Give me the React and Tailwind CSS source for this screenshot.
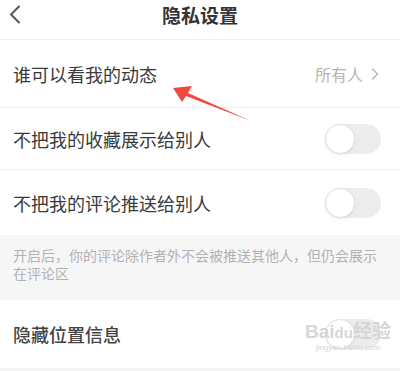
import React from 'react';

const font = { fontFamily: '"Noto Sans CJK SC", "Noto Sans", sans-serif' };

function Toggle() {
  return (
    <div className="w-[56px] h-[30px] rounded-full bg-[#ececec] relative shrink-0">
      <div className="absolute left-0 top-0 w-[30px] h-[30px] rounded-full bg-white border border-[#e2e2e2] shadow-[0_1px_2px_rgba(0,0,0,0.08)]" />
    </div>
  );
}

function Row({ label, height, right, bold = false, divider = true }) {
  return (
    <div className={`flex items-center justify-between pl-[13px] pr-[19px] bg-white ${height} ${divider ? 'border-b border-[#f0f0f0]' : ''}`}>
      <span className={`text-[18px] leading-none ${bold ? 'text-[#444] font-medium' : 'text-[#3a3a3a]'}`}>{label}</span>
      {right}
    </div>
  );
}

export default function App() {
  return (
    <div className="w-[400px] h-[371px] bg-white overflow-hidden relative" style={font}>
      <div className="h-[40px] relative flex items-center justify-center border-b border-[#f0f0f0]">
        <svg className="absolute left-[8px] top-[5px]" width="14" height="19" viewBox="0 0 14 19">
          <path d="M11 1.5 L3 9.5 L11 17.5" fill="none" stroke="#555" strokeWidth="2" strokeLinecap="round" strokeLinejoin="round" />
        </svg>
        <span className="text-[19px] font-bold text-[#333] tracking-[0px] -mt-[8px]">隐私设置</span>
      </div>

      <Row
        label="谁可以看我的动态"
        height="h-[68px]"
        right={
          <div className="flex items-center gap-[8px] text-[#b4b4b4] pr-[2px]">
            <span className="text-[16px] leading-none">所有人</span>
            <svg width="8" height="12" viewBox="0 0 8 12">
              <path d="M1.5 1 L6.5 6 L1.5 11" fill="none" stroke="#bbb" strokeWidth="1.6" strokeLinecap="round" strokeLinejoin="round" />
            </svg>
          </div>
        }
      />
      <Row label="不把我的收藏展示给别人" height="h-[62px]" right={<Toggle />} />
      <Row label="不把我的评论推送给别人" height="h-[65px]" right={<Toggle />} divider={false} />

      <div className="h-[65px] bg-[#f6f6f6] px-[13px] pt-[11px] text-[14px] leading-[18px] text-[#b2b2b2]">
        开启后，你的评论除作者外不会被推送其他人，但仍会展示
        <br />
        在评论区
      </div>

      <Row label="隐藏位置信息" height="h-[68px]" right={<Toggle />} bold divider={false} />
      <div className="h-[3px] bg-[#f4f4f4]" />

      <div className="absolute left-[305px] top-[322px] flex flex-col items-center text-[#d6d6d6] leading-none pointer-events-none">
        <span className="text-[19px] font-bold tracking-[0px]" style={{ fontFamily: '"Liberation Sans", "Noto Sans CJK SC", sans-serif' }}>
          Bai<span className="text-[15px]">du</span>经验
        </span>
        <span className="text-[8px] mt-[3px]" style={{ fontFamily: '"Liberation Sans", sans-serif' }}>jingyan.baidu.com</span>
      </div>

      <svg className="absolute left-0 top-0 pointer-events-none" width="400" height="371" viewBox="0 0 400 371">
        <polygon points="173,88 192,86 188,93 251,121 186,96 182,102" fill="#f2493f" />
      </svg>
    </div>
  );
}
